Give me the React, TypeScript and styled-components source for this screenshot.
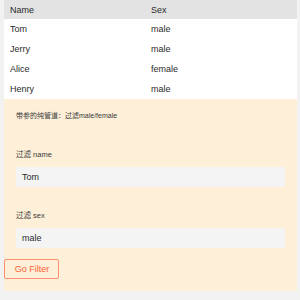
import React from "react";
import styled, { createGlobalStyle } from "styled-components";

const Global = createGlobalStyle`
  html, body { margin: 0; padding: 0; background: #f2f2f2; }
  body { font-family: "Liberation Sans", "Noto Sans CJK SC", sans-serif; color: #333; }
`;

const Page = styled.div`
  margin: 0 3px 0 4px;
  display: flex;
  flex-direction: column;
`;

const Table = styled.div`
  display: flex;
  flex-direction: column;
  background: #fff;
`;

const Row = styled.div<{ $head?: boolean }>`
  display: grid;
  grid-template-columns: 141px 1fr;
  padding: 0 6px;
  height: ${(p) => (p.$head ? 19 : 20)}px;
  align-items: center;
  background: ${(p) => (p.$head ? "#e3e3e3" : "#fff")};
  font-size: 9px;
  color: #2a2a2a;
`;

const Panel = styled.div`
  background: #fdefd8;
  height: 192px;
  display: flex;
  flex-direction: column;
  padding: 0 12px;
`;

const Note = styled.div`
  font-size: 7px;
  color: #3a3a3a;
  margin-top: 13px;
  line-height: 8px;
`;

const Label = styled.div<{ $top: number }>`
  font-size: 7.5px;
  color: #3a3a3a;
  margin-top: ${(p) => p.$top}px;
  line-height: 8px;
`;

const Field = styled.div`
  margin-top: 8px;
  height: 20px;
  background: #f4f4f4;
  display: flex;
  align-items: center;
  padding-left: 6px;
  font-size: 9px;
  color: #2a2a2a;
`;

const Button = styled.button`
  margin: 11px 0 0 -12px;
  width: 55px;
  height: 20px;
  box-sizing: border-box;
  border: 1px solid #ff8f70;
  border-radius: 2px;
  background: transparent;
  color: #ff6436;
  font-family: "Liberation Sans", sans-serif;
  font-size: 9px;
  padding: 0 0 0 1px;
`;

const rows = [
  ["Tom", "male"],
  ["Jerry", "male"],
  ["Alice", "female"],
  ["Henry", "male"],
];

export default function App() {
  return (
    <>
      <Global />
      <Page>
        <Table>
          <Row $head>
            <span>Name</span>
            <span>Sex</span>
          </Row>
          {rows.map(([n, s]) => (
            <Row key={n}>
              <span>{n}</span>
              <span>{s}</span>
            </Row>
          ))}
        </Table>
        <Panel>
          <Note>带参的纯管道：过滤male/female</Note>
          <Label $top={31}>过滤 name</Label>
          <Field>Tom</Field>
          <Label $top={25}>过滤 sex</Label>
          <Field>male</Field>
          <Button>Go Filter</Button>
        </Panel>
      </Page>
    </>
  );
}
